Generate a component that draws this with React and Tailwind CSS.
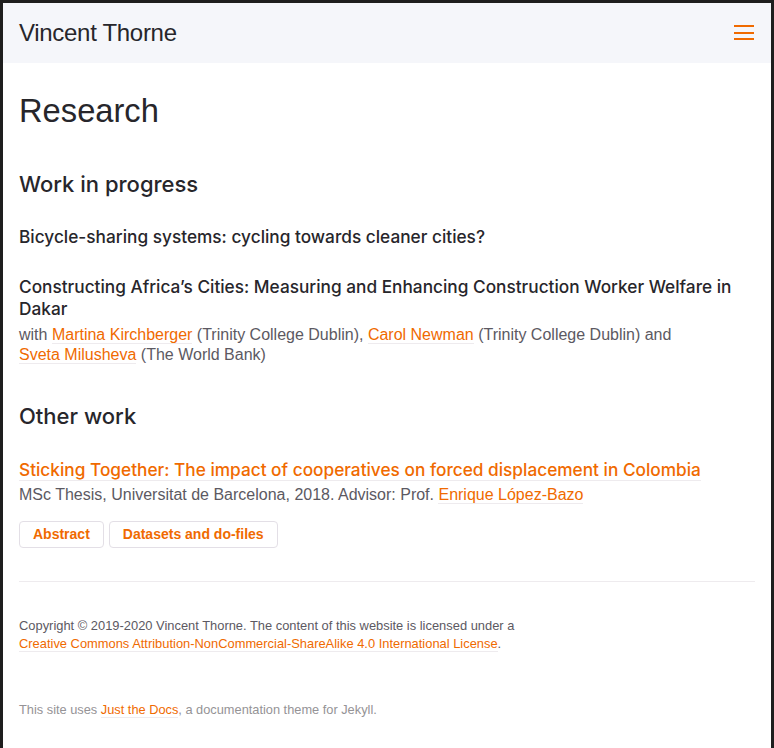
export default function App() {
  const link = "text-[#f06a00] border-b border-[#eeebee] whitespace-nowrap";
  const head = { fontFamily: 'Inter, "Liberation Sans", Arial, sans-serif' };
  return (
    <div className="min-h-[748px] bg-[#1e1e1e] pt-[3px] px-[3px]" style={{ fontFamily: '"Liberation Sans", Arial, sans-serif' }}>
      <div className="bg-white min-h-[745px]">
        <header className="h-[60px] bg-[#f5f6fa] flex items-center justify-between pl-[16px] pr-[17px]">
          <div className="text-[24px] text-[#27262b] leading-none tracking-[-0.3px]">Vincent Thorne</div>
          <div className="flex flex-col gap-[4.5px] w-[20px] -mt-[1px]">
            <span className="block h-[2px] bg-[#f06a00]"></span>
            <span className="block h-[2px] bg-[#f06a00]"></span>
            <span className="block h-[2px] bg-[#f06a00]"></span>
          </div>
        </header>
        <main className="px-[16px] pb-[20px]">
          <h1 className="mt-[28px] text-[32.7px] leading-[40px] text-[#27262b]">Research</h1>
          <h2 style={head} className="mt-[39px] text-[22px] leading-[28px] text-[#27262b] font-medium">Work in progress</h2>
          <h3 style={head} className="mt-[28px] text-[17.25px] leading-[22px] text-[#27262b] font-medium">Bicycle-sharing systems: cycling towards cleaner cities?</h3>
          <h3 style={head} className="mt-[28px] text-[17.25px] leading-[22px] text-[#27262b] font-medium">Constructing Africa’s Cities: Measuring and Enhancing Construction Worker Welfare in Dakar</h3>
          <p className="mt-[5px] text-[16px] leading-[20px] text-[#5c5962]">
            with <a className={link}>Martina Kirchberger</a> (Trinity College Dublin), <a className={link}>Carol Newman</a> (Trinity College Dublin) and <a className={link}>Sveta Milusheva</a> (The World Bank)
          </p>
          <h2 style={head} className="mt-[37px] text-[22px] leading-[28px] text-[#27262b] font-medium">Other work</h2>
          <h3 style={head} className="mt-[28px] text-[17.25px] leading-[24px] font-medium">
            <a className="text-[#f06a00] border-b border-[#eeebee]">Sticking Together: The impact of cooperatives on forced displacement in Colombia</a>
          </h3>
          <p className="mt-[3px] text-[16px] leading-[20px] text-[#5c5962]">
            MSc Thesis, Universitat de Barcelona, 2018. Advisor: Prof. <a className={link}>Enrique López-Bazo</a>
          </p>
          <div className="mt-[16px] flex gap-[5px]">
            <button className="h-[27px] px-[13px] border border-[#e3dfe6] rounded-[4px] text-[14px] font-bold text-[#f06a00] bg-white">Abstract</button>
            <button className="h-[27px] px-[13px] border border-[#e3dfe6] rounded-[4px] text-[14px] font-bold text-[#f06a00] bg-white">Datasets and do-files</button>
          </div>
          <hr className="mt-[33px] border-0 border-t border-[#eeebee]" />
          <p className="mt-[35px] text-[12.9px] leading-[18px] text-[#5c5962]">
            Copyright © 2019-2020 Vincent Thorne. The content of this website is licensed under a<br />
            <a className={link}>Creative Commons Attribution-NonCommercial-ShareAlike 4.0 International License</a>.
          </p>
          <p className="mt-[48px] text-[12.8px] leading-[18px] text-[#959396]">
            This site uses <a className={link}>Just the Docs</a>, a documentation theme for Jekyll.
          </p>
        </main>
      </div>
    </div>
  );
}
